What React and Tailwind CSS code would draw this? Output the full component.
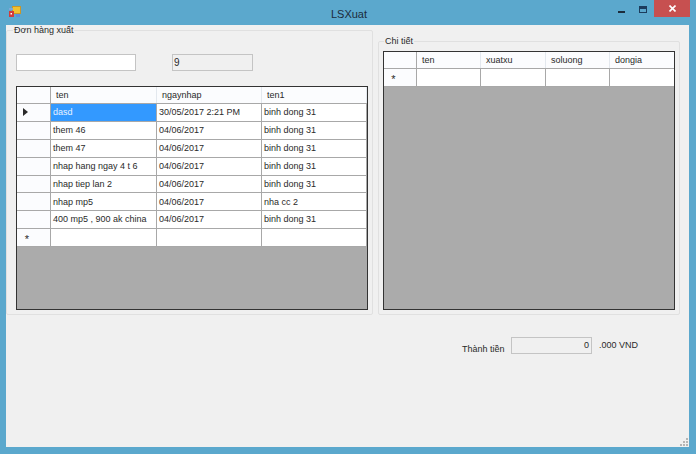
import React from "react";

const orders = [
  ["dasd", "30/05/2017 2:21 PM", "binh dong 31"],
  ["them 46", "04/06/2017", "binh dong 31"],
  ["them 47", "04/06/2017", "binh dong 31"],
  ["nhap hang ngay 4 t 6", "04/06/2017", "binh dong 31"],
  ["nhap tiep lan 2", "04/06/2017", "binh dong 31"],
  ["nhap mp5", "04/06/2017", "nha cc 2"],
  ["400 mp5 , 900 ak china", "04/06/2017", "binh dong 31"],
  ["", "", ""],
];

const AppIcon = () => (
  <svg width="12" height="12" viewBox="0 0 12 12">
    <rect x="3.5" y="0.5" width="8" height="7" fill="#f2c230" stroke="#c9962a" />
    <rect x="7" y="8" width="4" height="3" fill="#5f8fd8" />
    <rect x="0" y="2" width="4" height="2" fill="#7fa8d8" />
    <rect x="0" y="5" width="5" height="6" fill="#d23b3b" />
    <rect x="1.5" y="7" width="1.5" height="1.5" fill="#fff" />
  </svg>
);

const HeaderCell = ({ w, children }) => (
  <div className={`${w} shrink-0 h-full flex items-center pl-[5px] pt-[1px] border-r border-[#e3e8ee] bg-[#fbfcfe]`}>{children}</div>
);

const BodyCell = ({ w, selected, children }) => (
  <div
    className={`${w} shrink-0 h-full flex items-center pl-[2px] pt-[1px] border-r border-[#a8a8a8] whitespace-nowrap ${
      selected ? "bg-[#3399ff] text-[#e8f2ff]" : "bg-white"
    }`}
  >
    {children}
  </div>
);

const RowHeader = ({ w, children }) => (
  <div className={`${w} shrink-0 h-full flex items-center justify-center bg-[#fbfcfe] border-r border-[#a8a8a8]`}>
    {children}
  </div>
);

const Star = () => <span className="text-[11px] leading-none pt-[3px] pr-[13px]">*</span>;

const Grid = ({ className, children }) => (
  <div className={`border border-[#333333] bg-[#ababab] overflow-hidden ${className}`}>{children}</div>
);

export default function App() {
  return (
    <div
      className="w-[696px] h-[454px] bg-[#5ba8cd] flex flex-col pl-[6px] pr-[7px] pb-[7px] text-[9px] text-[#2a2a2a]"
      style={{ fontFamily: '"Liberation Sans", Arial, sans-serif' }}
    >
      {/* title bar */}
      <div className="h-[25px] shrink-0 flex items-start -ml-[6px] -mr-[7px]">
        <div className="pl-[9px] pt-[6px]">
          <AppIcon />
        </div>
        <div className="flex-1 text-center text-[11px] pt-[6px] pl-[59px] text-[#1c2c3c]">LSXuat</div>
        <div className="flex items-start">
          <div className="w-[7px] h-[2px] bg-[#1c2c3c] mt-[11px] mr-[14px]" />
          <div className="w-[8px] h-[7px] border border-[#1c3c5c] border-t-[3px] mt-[6px] mr-[7px]" />
          <div className="w-[36px] h-[17px] bg-[#c75050] flex items-center justify-center mr-[6px]">
            <svg width="7" height="7" viewBox="0 0 7 7" stroke="white" strokeWidth="1.6">
              <path d="M0.5 0.5 6.5 6.5M6.5 0.5 0.5 6.5" />
            </svg>
          </div>
        </div>
      </div>

      {/* client area */}
      <div className="flex-1 bg-[#f0f0f0] flex flex-col relative">
        <div className="flex items-start">
          {/* don hang xuat */}
          <fieldset className="w-[367px] h-[291px] mt-[-1px] border border-[#e0e0e0] rounded-[2px] pl-[9px] flex flex-col">
            <legend className="ml-[-3px] px-[1px] leading-[13px]">Đơn hàng xuất</legend>
            <div className="flex items-center mt-[17px]">
              <div className="w-[120px] h-[17px] bg-white border border-[#c4c4c4]" />
              <div className="w-[81px] h-[17px] ml-[36px] bg-[#f0f0f0] border border-[#c4c4c4] flex items-center pl-[1px] text-[10px]">
                9
              </div>
            </div>
            <Grid className="w-[352px] h-[224px] mt-[15px]">
              <div className="h-[17px] flex border-b border-[#a8a8a8]">
                <RowHeader w="w-[34px]" />
                <HeaderCell w="w-[106px]">ten</HeaderCell>
                <HeaderCell w="w-[105px]">ngaynhap</HeaderCell>
                <HeaderCell w="w-[105px]">ten1</HeaderCell>
              </div>
              {orders.map((row, i) => (
                <div key={i} className="h-[17.875px] flex border-b border-[#a8a8a8]">
                  <RowHeader w="w-[34px]">
                    {i === 0 && (
                      <svg width="5" height="8" viewBox="0 0 5 8" className="mr-[16px]">
                        <path d="M0 0 5 4 0 8Z" fill="#2a2a2a" />
                      </svg>
                    )}
                    {i === orders.length - 1 && <Star />}
                  </RowHeader>
                  <BodyCell w="w-[106px]" selected={i === 0}>
                    {row[0]}
                  </BodyCell>
                  <BodyCell w="w-[105px]">{row[1]}</BodyCell>
                  <BodyCell w="w-[105px]">{row[2]}</BodyCell>
                </div>
              ))}
            </Grid>
          </fieldset>

          {/* chi tiet */}
          <fieldset className="w-[302px] h-[280px] ml-[5px] mt-[10px] border border-[#e0e0e0] rounded-[2px] pl-[4px] flex flex-col">
            <legend className="ml-[1px] px-[1px] leading-[13px]">Chi tiết</legend>
            <Grid className="w-[292px] h-[259px] mt-[3px]">
              <div className="h-[17px] flex border-b border-[#a8a8a8]">
                <RowHeader w="w-[33px]" />
                <HeaderCell w="w-[64px]">ten</HeaderCell>
                <HeaderCell w="w-[65px]">xuatxu</HeaderCell>
                <HeaderCell w="w-[64px]">soluong</HeaderCell>
                <HeaderCell w="w-[65px]">dongia</HeaderCell>
              </div>
              <div className="h-[18px] flex border-b border-[#a8a8a8]">
                <RowHeader w="w-[33px]">
                  <Star />
                </RowHeader>
                <BodyCell w="w-[64px]" />
                <BodyCell w="w-[65px]" />
                <BodyCell w="w-[64px]" />
                <BodyCell w="w-[65px]" />
              </div>
            </Grid>
          </fieldset>
        </div>

        {/* total */}
        <div className="flex items-start mt-[22px] pl-[456px]">
          <span className="mt-[6px] w-[49px] whitespace-nowrap">Thành tiền</span>
          <div className="w-[81px] h-[17px] bg-[#f0f0f0] border border-[#c4c4c4] flex items-center justify-end pr-[2px]">
            0
          </div>
          <span className="ml-[7px] mt-[2px]">.000 VND</span>
        </div>

        {/* size grip */}
        <svg width="8" height="8" viewBox="0 0 8 8" className="absolute right-[1px] bottom-[1px]" fill="#b5b5b5">
          <rect x="6" y="0" width="2" height="2" />
          <rect x="3" y="3" width="2" height="2" />
          <rect x="6" y="3" width="2" height="2" />
          <rect x="0" y="6" width="2" height="2" />
          <rect x="3" y="6" width="2" height="2" />
          <rect x="6" y="6" width="2" height="2" />
        </svg>
      </div>
    </div>
  );
}
